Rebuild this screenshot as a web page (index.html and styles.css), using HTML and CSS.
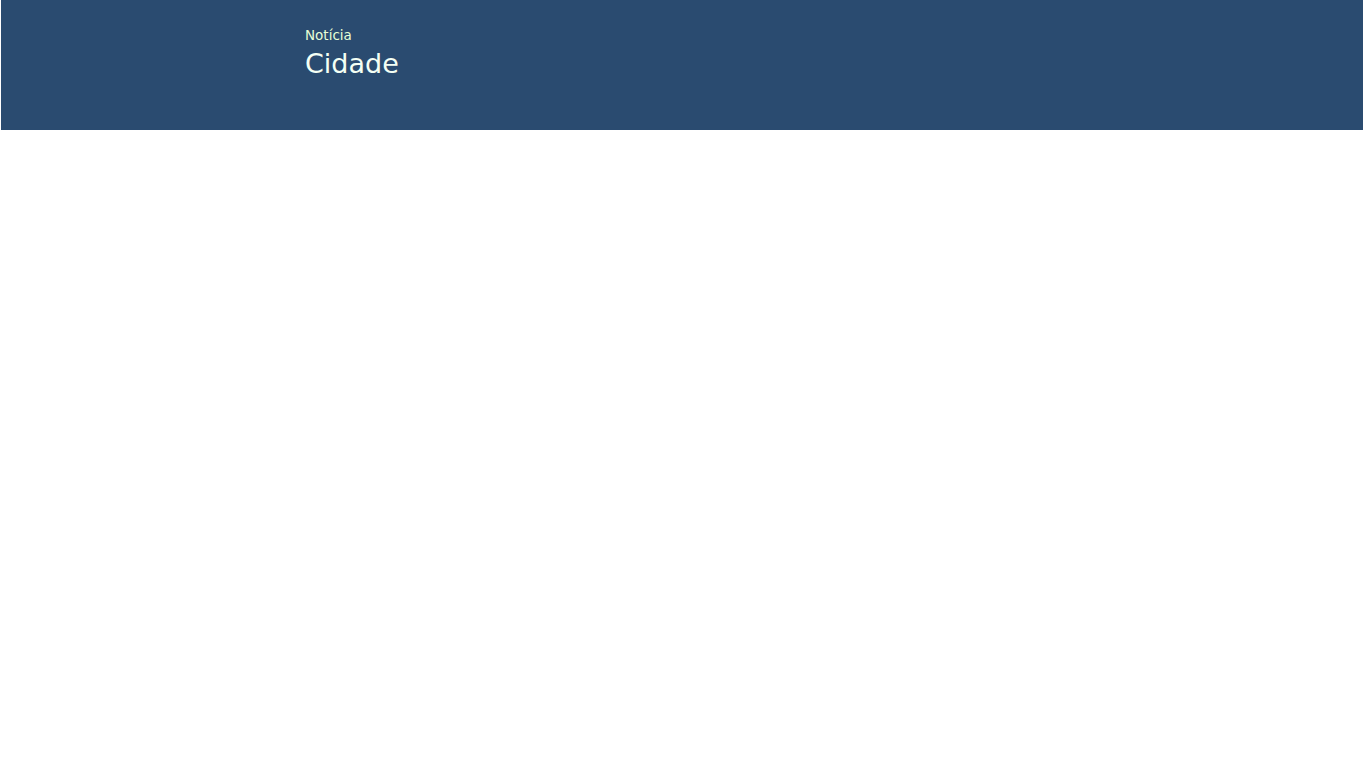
FILE: index.html
```html
<!DOCTYPE html>
<html lang="pt">
<head>
<meta charset="utf-8">
<title>Cidade</title>
<link rel="stylesheet" href="styles.css">
</head>
<body>
<header class="banner">
  <div class="banner-inner">
    <div class="kicker">Notícia</div>
    <h1 class="title">Cidade</h1>
  </div>
</header>
</body>
</html>
```
FILE: styles.css
```css
html, body {
  margin: 0;
  padding: 0;
  background: #ffffff;
}
body {
  font-family: "Trebuchet MS", "DejaVu Sans", sans-serif;
}
.banner {
  margin: 0 3px 0 1px;
  height: 130px;
  background: #2a4b70;
  box-sizing: border-box;
}
.banner-inner {
  padding: 27px 0 0 304px;
}
.kicker {
  font-size: 13.5px;
  line-height: 16px;
  color: #e6ffd6;
}
.title {
  margin: 5px 0 0 0;
  font-size: 27px;
  line-height: 32px;
  font-weight: normal;
  color: #f4fff4;
}
```
